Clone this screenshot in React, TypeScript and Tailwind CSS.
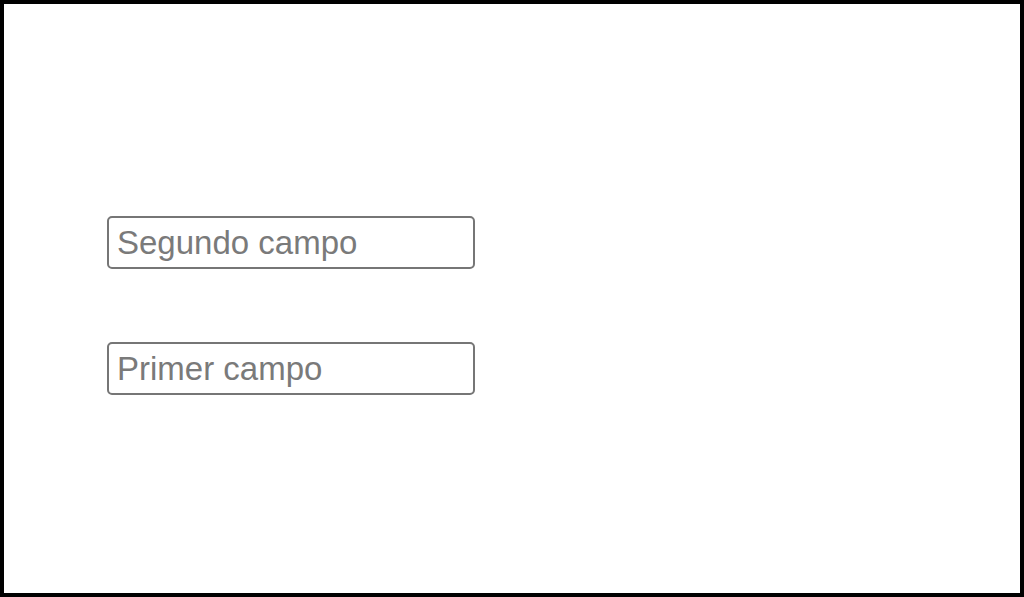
import React from "react"

const Field = ({ placeholder }: { placeholder: string }) => (
  <input
    type="text"
    placeholder={placeholder}
    className="w-[368px] h-[53px] border-2 border-[#767676] rounded-[5px] px-[8px] text-[33px] text-[#555] placeholder:text-[#7a7a7a] bg-white focus:outline-none font-['Liberation_Sans',Arial,sans-serif]"
  />
)

export default function App() {
  return (
    <div className="w-[1024px] h-[597px] border-4 border-black bg-white">
      <div className="flex flex-col items-start gap-[73px] pl-[103px] pt-[212px]">
        <Field placeholder="Segundo campo" />
        <Field placeholder="Primer campo" />
      </div>
    </div>
  )
}
